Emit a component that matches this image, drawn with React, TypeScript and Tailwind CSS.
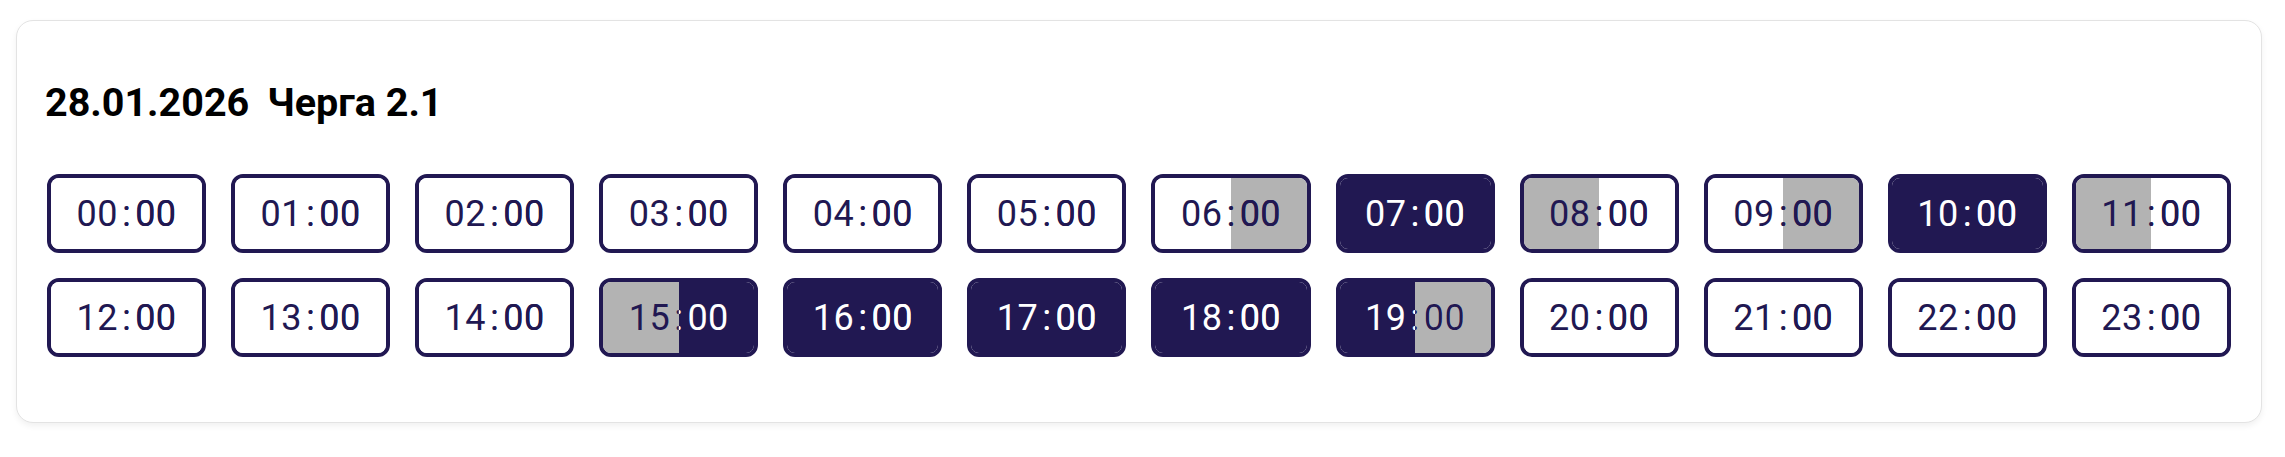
import React from "react"

type Half = "w" | "g" | "n"

// left half / right half of each hour slot
const slots: [Half, Half][] = [
  ["w", "w"], ["w", "w"], ["w", "w"], ["w", "w"], ["w", "w"], ["w", "w"],
  ["w", "g"], ["n", "n"], ["g", "w"], ["w", "g"], ["n", "n"], ["g", "w"],
  ["w", "w"], ["w", "w"], ["w", "w"], ["g", "n"], ["n", "n"], ["n", "n"],
  ["n", "n"], ["n", "g"], ["w", "w"], ["w", "w"], ["w", "w"], ["w", "w"],
]

const bg: Record<Half, string> = {
  w: "bg-white",
  g: "bg-[#b3b3b3]",
  n: "bg-[#211852]",
}

const fg: Record<Half, string> = {
  w: "text-[#211852]",
  g: "text-[#211852]",
  n: "text-white",
}

function Label({ hour }: { hour: string }) {
  return (
    <>
      {hour}
      <span className="mx-[4px]">:</span>
      00
    </>
  )
}

function Slot({ hour, left, right }: { hour: string; left: Half; right: Half }) {
  return (
    <div className="relative h-[79px] rounded-[12px] border-[4px] border-[#211852] overflow-hidden">
      {/* two halves of the background */}
      <div className="absolute inset-0 flex">
        <div className={`w-1/2 ${bg[left]}`} />
        <div className={`w-1/2 ${bg[right]}`} />
      </div>

      <div className={`absolute inset-0 flex items-center justify-center text-[36px] tracking-[0.5px] ${fg[left]}`}>
        <Label hour={hour} />
      </div>
      <div
        className={`absolute inset-0 flex items-center justify-center text-[36px] tracking-[0.5px] [clip-path:inset(0_0_0_50%)] ${fg[right]}`}
      >
        <Label hour={hour} />
      </div>
    </div>
  )
}

export default function App() {
  return (
    <div className="min-h-screen bg-white pt-[20px] px-[16px] font-['Roboto','Liberation_Sans',sans-serif]">
      <div className="w-[2246px] h-[403px] rounded-[17px] border border-[#e3e3e3] bg-white shadow-[0_3px_6px_rgba(0,0,0,0.06)] px-[30px] pt-[58px]">
        <h2 className="-ml-[2px] flex gap-[18px] text-[39.5px] leading-[48px] font-bold text-black">
          <span>28.01.2026</span>
          <span>Черга 2.1</span>
        </h2>

        <div className="mt-[47px] grid grid-cols-12 gap-[25px]">
          {slots.map(([l, r], i) => (
            <Slot key={i} hour={String(i).padStart(2, "0")} left={l} right={r} />
          ))}
        </div>
      </div>
    </div>
  )
}
